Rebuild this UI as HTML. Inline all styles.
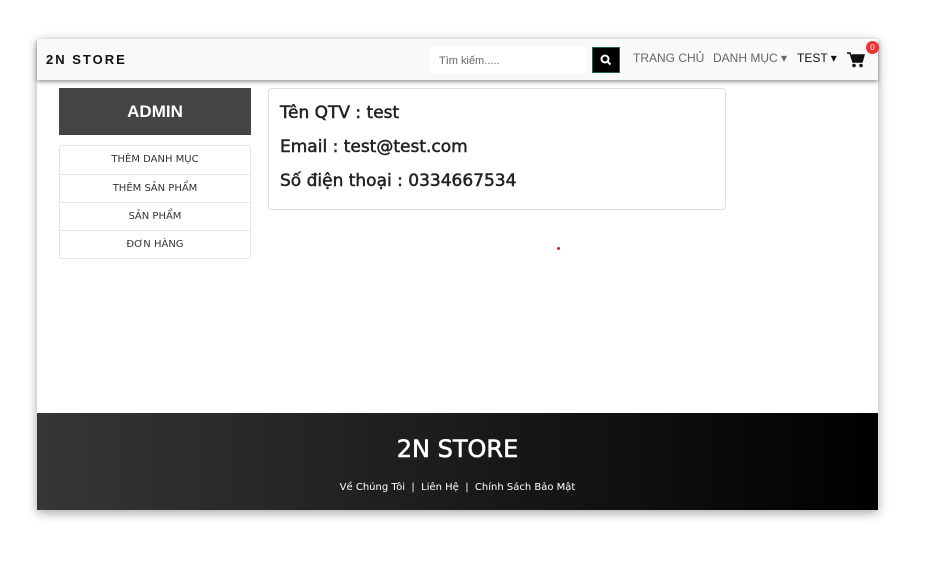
<!DOCTYPE html>
<html><head><meta charset="utf-8"><style>
*{box-sizing:border-box;margin:0;padding:0}
body{width:939px;height:561px;background:#fff;font-family:"Liberation Sans",sans-serif;position:relative;overflow:hidden}
.frame{position:absolute;left:37px;top:39px;width:841px;height:471px;background:#fff;box-shadow:0 3px 10px rgba(0,0,0,.35)}
.nav{position:absolute;left:0;top:0;width:841px;height:41px;background:#f8f9fa;box-shadow:0 2px 4px rgba(0,0,0,.4)}
.brand{position:absolute;left:9px;top:13px;font-weight:bold;font-size:13px;letter-spacing:2px;color:#111}
.search{position:absolute;left:393px;top:8px;width:157px;height:26px;background:#fff;font-size:11px;color:#666;padding:8px 0 0 9px}
.sbtn{position:absolute;left:555px;top:8px;width:28px;height:26px;background:#000;border:1px solid #264}
.nl{position:absolute;top:12px;font-size:12px;color:#666}
.abox{position:absolute;left:22px;top:49px;width:192px;height:47px;background:#444;color:#fff;font-size:17px;font-weight:bold;text-align:center;line-height:47px}
.list{position:absolute;left:22px;top:106px;width:192px;border:1px solid #e6e6e6;border-radius:3px}
.list div{height:28px;line-height:28px;text-align:center;color:#333;border-top:1px solid #e6e6e6;font-family:"DejaVu Sans",sans-serif;font-size:10px}
.list div:first-child{border-top:none}
.card{position:absolute;left:231px;top:49px;width:458px;height:122px;border:1px solid #ddd;border-radius:4px;padding:14px 11px}
.card p{color:#222;height:34px;font-family:"DejaVu Sans",sans-serif;font-size:17px;-webkit-text-stroke:0.5px #222}
.foot{position:absolute;left:0;top:374px;width:841px;height:97px;background:linear-gradient(90deg,#363636,#000)}
</style></head><body>
<div class="frame">
 <div class="nav">
  <div class="brand">2N STORE</div>
  <div class="search">Tìm kiếm.....</div>
  <div class="sbtn"><svg width="26" height="24" viewBox="0 0 26 24"><circle cx="12" cy="11" r="3.5" stroke="#fff" stroke-width="2" fill="none"/><path d="M14.5 13.5l3 3" stroke="#fff" stroke-width="2"/></svg></div>
  <div class="nl" style="left:596px">TRANG CHỦ</div>
  <div class="nl" style="left:676px">DANH MỤC ▾</div>
  <div class="nl" style="left:760px;color:#111">TEST ▾</div>
  <svg style="position:absolute;left:810px;top:13px" width="18" height="16" viewBox="0 0 18 16"><path d="M0 1h3l3 9h9l2-7H5" fill="#111" stroke="#111" stroke-width="1.5"/><circle cx="7" cy="13.5" r="1.8" fill="#111"/><circle cx="14" cy="13.5" r="1.8" fill="#111"/></svg>
  <div style="position:absolute;left:829px;top:2px;width:13px;height:13px;border-radius:50%;background:#e33;color:#fff;font-size:8px;text-align:center;line-height:13px">0</div>
 </div>
 <div class="abox">ADMIN</div>
 <div class="list"><div>THÊM DANH MỤC</div><div>THÊM SẢN PHẨM</div><div>SẢN PHẨM</div><div>ĐƠN HÀNG</div></div>
 <div class="card"><p>Tên QTV : test</p><p>Email : test@test.com</p><p>Số điện thoại : 0334667534</p></div>
 <div style="position:absolute;left:520px;top:208px;width:3px;height:3px;border-radius:50%;background:#d22"></div>
 <div class="foot">
  <div style="position:absolute;width:100%;top:22px;text-align:center;color:#fff;font-size:24px;font-family:'DejaVu Sans',sans-serif;-webkit-text-stroke:0.6px #fff">2N STORE</div>
  <div style="position:absolute;width:100%;top:69px;text-align:center;color:#fff;font-size:10px;font-family:'DejaVu Sans',sans-serif">Về Chúng Tôi &nbsp;|&nbsp; Liên Hệ &nbsp;|&nbsp; Chính Sách Bảo Mật</div>
 </div>
</div>
</body></html>
